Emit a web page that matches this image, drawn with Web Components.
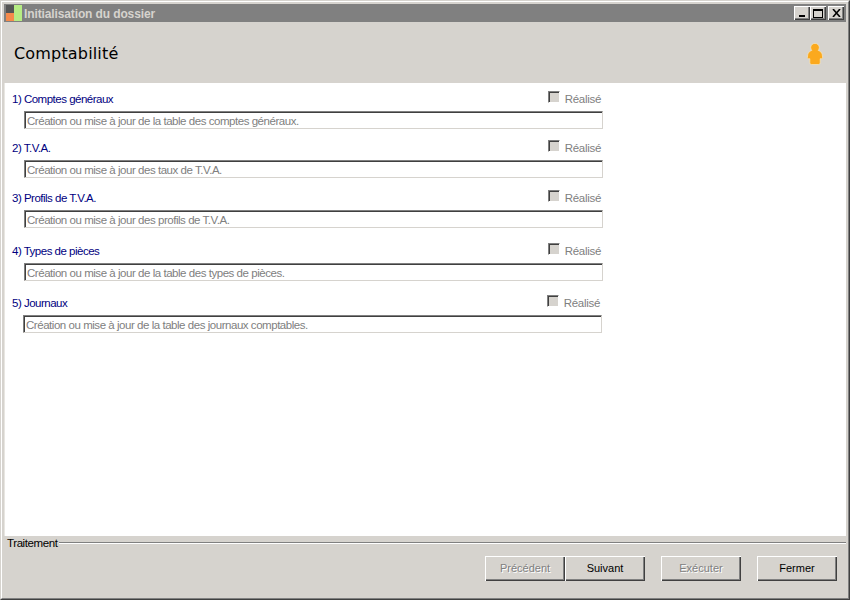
<!DOCTYPE html>
<html lang="fr"><head><meta charset="utf-8"><title>Initialisation du dossier</title>
<style>
html,body{margin:0;padding:0;width:850px;height:600px;overflow:hidden;background:#d6d3ce;font-family:"Liberation Sans",Arial,sans-serif}
</style></head><body>
<app-window caption="Initialisation du dossier">
  <app-header slot="header" heading="Comptabilité"></app-header>
  <task-row label="1) Comptes généraux" text="Création ou mise à jour de la table des comptes généraux." style="--top:8px"></task-row>
  <task-row label="2) T.V.A." text="Création ou mise à jour des taux de T.V.A." style="--top:11px"></task-row>
  <task-row label="3) Profils de T.V.A." text="Création ou mise à jour des profils de T.V.A." style="--top:12px"></task-row>
  <task-row label="4) Types de pièces" text="Création ou mise à jour de la table des types de pièces." style="--top:15px"></task-row>
  <task-row label="5) Journaux" text="Création ou mise à jour de la table des journaux comptables." style="--top:14px;--shift:1px"></task-row>
  <action-bar slot="footer" legend="Traitement">
    <win-button disabled style="--gap:0">Précédent</win-button>
    <win-button style="--gap:16px">Suivant</win-button>
    <win-button disabled style="--gap:16px">Exécuter</win-button>
    <win-button>Fermer</win-button>
  </action-bar>
</app-window>
<script>
function def(name, css, html, attrs){
  customElements.define(name, class extends HTMLElement{
    connectedCallback(){
      if(this.shadowRoot) return;
      const r=this.attachShadow({mode:'open'});
      let h=html;
      for(const a of (attrs||[])) h=h.split('{{'+a+'}}').join(this.getAttribute(a)||'');
      r.innerHTML='<style>'+css+'</style>'+h;
    }
  });
}
def('app-window',`
:host{display:flex;flex-direction:column;box-sizing:border-box;width:850px;height:600px;background:#d6d3ce;
 border:1px solid;border-color:#d6d3ce #404040 #404040 #d6d3ce;}
.in{flex:1;display:flex;flex-direction:column;min-height:0;border:1px solid;border-color:#fff #808080 #808080 #fff;padding:2px;padding-bottom:1px}
.bar{height:18px;flex:none;background:#808080;display:flex;align-items:center;padding:0 2px 0 1px;color:#d6d3ce;font:bold 12px/18px "Liberation Sans",sans-serif;}
.ico{width:18px;height:16px;flex:none;margin-right:1px}
.cap{flex:1;white-space:nowrap;letter-spacing:-.12px;padding-top:1px}
.btns{display:flex}
.b{width:16px;height:14px;box-sizing:border-box;background:#d6d3ce;box-shadow:inset 1px 1px 0 #fff,inset -1px -1px 0 #404040,inset -2px -2px 0 #808080;display:flex;align-items:center;justify-content:center}
.b svg{display:block}
.b.x{margin-left:2px}
.main{flex:1;background:#fff;min-height:0;padding-left:0;display:flex;flex-direction:column;border-left:1px solid #e8e6e1}
`,`<div class="in">
<div class="bar">
<svg class="ico" viewBox="0 0 18 16" aria-hidden="true"><rect x="1" y="0" width="8" height="8" fill="#555"/><rect x="1" y="8" width="8" height="8" fill="#f58a4b"/><rect x="9" y="0" width="8" height="16" fill="#b6ec84"/></svg>
<span class="cap">{{caption}}</span>
<div class="btns">
<div class="b"><svg width="8" height="7" viewBox="0 0 8 7"><rect x="1" y="5" width="6" height="2" fill="#000"/></svg></div>
<div class="b"><svg width="10" height="9" viewBox="0 0 10 9"><path d="M0 0h10v9H0z M1 2v6h8V2z" fill="#000" fill-rule="evenodd"/></svg></div>
<div class="b x"><svg width="9" height="8" viewBox="0 0 9 8"><path d="M1 0 L8 8 M8 0 L1 8" stroke="#000" stroke-width="1.6" fill="none"/></svg></div>
</div></div>
<slot name="header"></slot>
<div class="main"><slot></slot></div>
<slot name="footer"></slot>
</div>`,['caption']);

def('app-header',`
:host{display:flex;align-items:center;justify-content:space-between;height:61px;flex:none;box-sizing:border-box;padding:0 23px 0 10px;background:#d6d3ce}
h1{margin:0;font:400 16px/20px "DejaVu Sans",sans-serif;color:#000;letter-spacing:.17px;position:relative;top:1px}
svg{display:block;margin-top:3px}
`,`<h1>{{heading}}</h1>
<svg width="16" height="22" viewBox="0 0 16 22" aria-hidden="true"><path d="M8 .4C10.500 .4 12.300 2.200 12.300 4.500 12.300 5.700 11.900 6.700 11.200 7.400 13.500 8.100 14.800 9.600 15.200 11.500L15.600 14.200C15.700 15.100 15.200 15.700 14.400 15.700H13.200V19.500C13.200 20.800 12.500 21.500 11.300 21.500H4.700C3.500 21.500 2.800 20.800 2.800 19.500V15.700H1.600C.8 15.700 .3 15.100 .4 14.200L.8 11.500C1.200 9.600 2.500 8.100 4.800 7.400 4.100 6.700 3.700 5.700 3.700 4.500 3.700 2.200 5.500 .4 8 .4Z" fill="#fba91e" stroke="#f7e6bf" stroke-width=".7"/></svg>`,['heading']);

def('task-row',`
:host{display:block;box-sizing:border-box;width:598px;margin-top:var(--top,0);padding-left:calc(7px - var(--shift,0px));padding-right:var(--shift,0px);font:400 11.5px/14px "Liberation Sans",sans-serif}
.top{display:flex;justify-content:space-between;align-items:center;height:15px;padding-left:var(--shift,0px)}
.lbl{color:#000080;letter-spacing:-.5px;white-space:nowrap}
.chk{display:flex;align-items:center;color:#808080;letter-spacing:-.3px;padding-right:2px}
.box{width:12px;height:12px;box-sizing:border-box;background:#d6d3ce;border:1px solid;border-color:#808080 #fff #fff #808080;box-shadow:inset 1px 1px 0 #404040;margin:-4px 5px 0 0}
.fld{margin:5px 0 0 12px;height:18px;box-sizing:border-box;border:1px solid;border-color:#808080 #d6d3ce #d6d3ce #808080;box-shadow:inset 1px 1px 0 #404040;background:#fff;color:#808080;padding:2px 0 0 2px;letter-spacing:-.46px;white-space:nowrap;overflow:hidden}
`,`<div class="top"><span class="lbl">{{label}}</span><span class="chk"><span class="box"></span>Réalisé</span></div>
<div class="fld">{{text}}</div>`,['label','text']);

def('action-bar',`
:host{display:block;flex:none;height:61px;box-sizing:border-box;background:#d6d3ce;position:relative}
.lg{display:flex;align-items:center;height:14px;font:400 11.5px/14px "Liberation Sans",sans-serif;color:#000;letter-spacing:-.4px;padding-left:3px}
.ln{flex:1;height:2px;background:linear-gradient(#808080 1px,#fff 1px);margin-left:1px}
.row{display:flex;justify-content:flex-end;padding:6px 9px 0 0}
`,`<div class="lg"><span>{{legend}}</span><span class="ln"></span></div><div class="row"><slot></slot></div>`,['legend']);

def('win-button',`
:host{display:block;width:80px;height:25px;margin-right:var(--gap,0);flex:none}
button{all:unset;box-sizing:border-box;display:flex;align-items:center;justify-content:center;width:100%;height:100%;background:#d6d3ce;color:#000;font:400 11px/1 "Liberation Sans",sans-serif;
box-shadow:inset 1px 1px 0 #fff,inset -1px -1px 0 #404040,inset -2px -2px 0 #808080}
:host([disabled]) button{color:#808080;text-shadow:1px 1px 0 #fff}
`,`<button><slot></slot></button>`);
</script>
</body></html>
